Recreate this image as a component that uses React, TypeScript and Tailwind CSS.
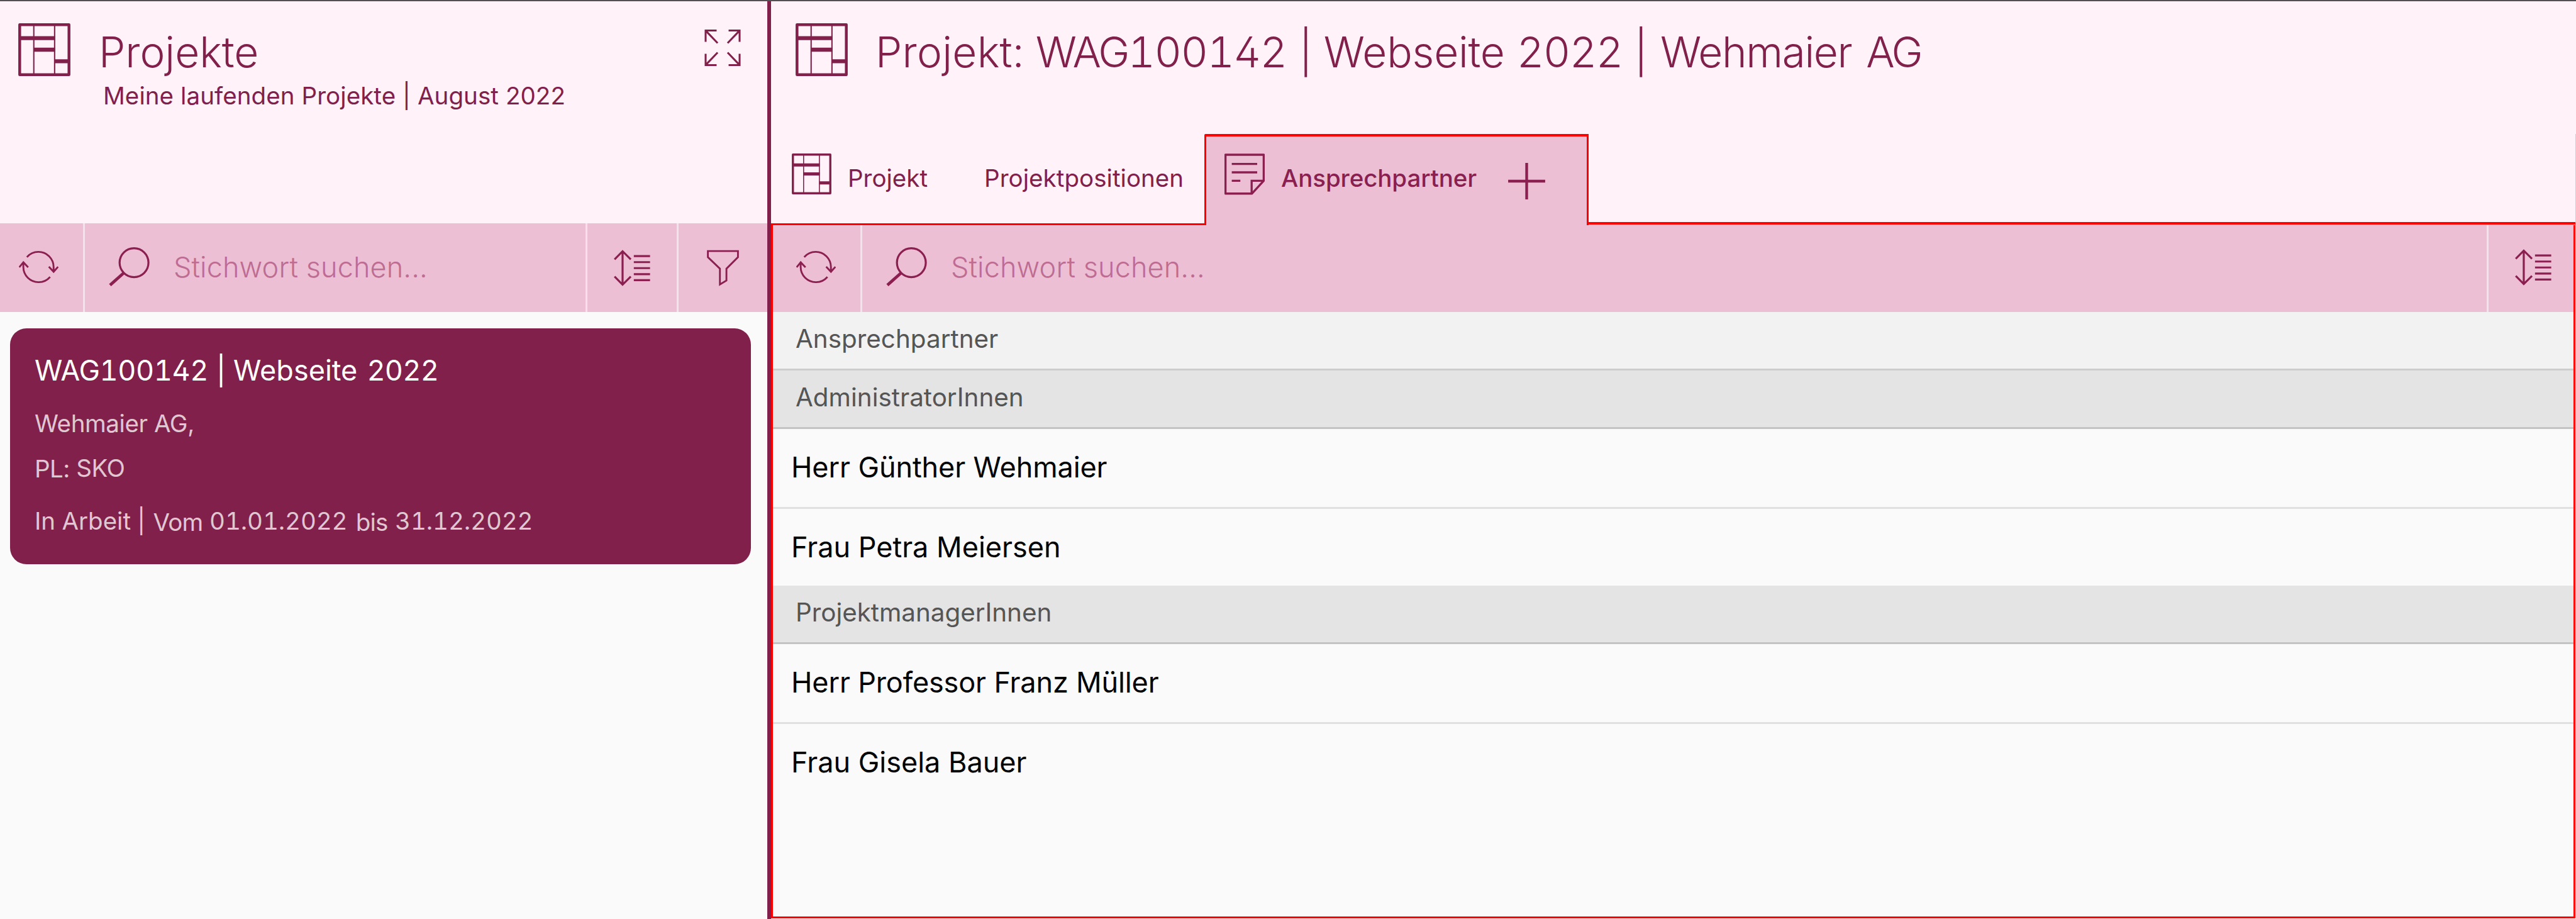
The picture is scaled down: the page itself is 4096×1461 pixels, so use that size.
import type { ReactNode } from 'react';

type IconProps = { className?: string };

function ProjectIcon({ className }: IconProps) {
  return (
    <svg viewBox="0 0 104 105" fill="none" stroke="currentColor" preserveAspectRatio="none" className={className}>
      <rect x="2.9" y="2.9" width="98.2" height="99.2" strokeWidth="5.6" strokeLinejoin="round" />
      <path d="M31 3V102M72.5 3V102" strokeWidth="2.6" />
      <path d="M2 29.5H73.5M31 52.5H73.5M72 75.5H101" strokeWidth="8" />
    </svg>
  );
}

function ExpandIcon({ className }: IconProps) {
  return (
    <svg viewBox="0 0 72 73" fill="none" stroke="currentColor" strokeWidth="3.8" className={className}>
      <path d="M24 2H2V24.5M2 2L26 27" />
      <path d="M48 2H70V24.5M70 2L46 27" />
      <path d="M24 71H2V48.5M2 71L26 46" />
      <path d="M48 71H70V48.5M70 71L46 46" />
    </svg>
  );
}

function RefreshIcon({ className }: IconProps) {
  return (
    <svg viewBox="0 0 79 64" fill="none" stroke="currentColor" strokeWidth="3.6" className={className}>
      <path d="M16 12.3A30.3 30.3 0 0 1 39 1.8A30.3 30.3 0 0 1 69.3 32V41M59.8 31.5L69.3 41.5L78.2 31.5" />
      <path d="M62.3 51.7A30.3 30.3 0 0 1 39 62.2A30.3 30.3 0 0 1 8.9 32V23M0.8 32.5L9 22.5L18.5 32.5" />
    </svg>
  );
}

function SearchIcon({ className }: IconProps) {
  return (
    <svg viewBox="0 0 81 77" fill="none" stroke="currentColor" className={className}>
      <circle cx="50" cy="30.5" r="28.6" strokeWidth="4" />
      <path d="M29.5 51L2.5 75" strokeWidth="6" />
    </svg>
  );
}

function SortIcon({ className }: IconProps) {
  return (
    <svg viewBox="0 0 72 72" fill="none" stroke="currentColor" strokeWidth="4" className={className}>
      <path d="M17.3 3V69M1.5 19L17.3 3L33.5 19M1.5 53L17.3 69L33.5 53" />
      <path d="M39.5 12.5H71.5M39.5 24.5H71.5M39.5 36.3H71.5M39.5 48.2H71.5M39.5 60H71.5" />
    </svg>
  );
}

function FilterIcon({ className }: IconProps) {
  return (
    <svg viewBox="0 0 64 72" fill="none" stroke="currentColor" strokeWidth="3.6" className={className}>
      <path d="M2 2.3H62V14.5L39 37.5V61L26 69V37.5L2 14.5Z" />
    </svg>
  );
}

function NoteIcon({ className }: IconProps) {
  return (
    <svg viewBox="0 0 80 82" fill="none" stroke="currentColor" strokeWidth="4.2" className={className}>
      <path d="M2 2.2H78V54L54.5 79.5H2Z" strokeLinejoin="round" />
      <path d="M78 54H54V79" />
      <path d="M14.5 20.5H65M14.5 37.3H65M14.5 54H31.5" />
    </svg>
  );
}

function PlusIcon({ className }: IconProps) {
  return (
    <svg viewBox="0 0 73 72" fill="none" stroke="currentColor" strokeWidth="5.4" className={className}>
      <path d="M36.5 0V72M0 36H73" />
    </svg>
  );
}

function IconCell({ children, className = '' }: { children: ReactNode; className?: string }) {
  return <div className={`flex h-full shrink-0 items-start border-[#f6e0eb] ${className}`}>{children}</div>;
}

function SearchField({ className = '' }: { className?: string }) {
  return (
    <div className={`flex h-full flex-1 items-start ${className}`}>
      <SearchIcon className="mt-[38px] h-[62px] w-[65px]" />
      <span className="mt-[47px] ml-[38px] text-[45px] leading-none font-light tracking-[0.12px] text-[#be6c92]">Stichwort suchen...</span>
    </div>
  );
}

function GroupRow({ label, className = '', track = '' }: { label: string; className?: string; track?: string }) {
  return (
    <div className={`flex shrink-0 items-start border-b-[3px] pl-[36px] text-[40.4px] leading-none text-[#555] ${className}`}>
      <span className={track}>{label}</span>
    </div>
  );
}

function ContactRow({ name, className = '', track = '' }: { name: string; className?: string; track?: string }) {
  return (
    <div className={`flex shrink-0 items-start border-[#e0e0e0] pl-[29px] text-[45px] leading-none text-black ${className}`}>
      <span className={track}>{name}</span>
    </div>
  );
}

function ProjectCard() {
  return (
    <article className="mt-[26px] ml-[16px] flex h-[375px] w-[1178px] flex-col rounded-[26px] bg-[#80204b] pl-[39px] leading-none text-[#e0c7d2]">
      <h2 className="mt-[44px] text-[45px] leading-none whitespace-pre text-white tabular-nums">
        <span className="tracking-[-0.45px]">WAG100142</span>
        <span className="ml-px"> | </span>
        <span>Webseite </span>
        <span className="ml-[3px] tracking-[-0.7px]">2022</span>
      </h2>
      <p className="mt-[43px] text-[38.5px] leading-none tracking-[-0.4px]">Wehmaier AG,</p>
      <p className="mt-[33px] flex text-[38.5px] leading-none tracking-[-0.5px] whitespace-pre">
        <span>PL:</span>
        <span className="-mt-px"> SKO</span>
      </p>
      <p className="mt-[45px] flex text-[38.5px] leading-none whitespace-pre tabular-nums">
        <span>In Arbeit | </span>
        <span className="mt-[2px] ml-[2px] tracking-[-0.8px]">Vom </span>
        <span className="ml-px tracking-[-0.1px]">01.01.2022 </span>
        <span className="mt-[2px] ml-[3px] tracking-[-0.8px]">bis </span>
        <span className="ml-[2px] tracking-[-0.1px]">31.12.2022</span>
      </p>
    </article>
  );
}

function ProjectsPanel() {
  return (
    <section className="flex w-[1220px] shrink-0 flex-col bg-[#fafafa]">
      <header className="flex h-[353px] shrink-0 items-start bg-[#fff2f8] pl-[29px] text-[#80204b]">
        <ProjectIcon className="mt-[35px] h-[84px] w-[83px]" />
        <div className="ml-[45px] flex flex-1 flex-col">
          <h1 className="mt-[47px] text-[67.4px] leading-none font-light">Projekte</h1>
          <p className="mt-[17px] ml-[7px] text-[38.5px] leading-none tracking-[0.08px] whitespace-pre">Meine laufenden Projekte | August 2022</p>
        </div>
        <ExpandIcon className="mt-[45px] mr-[42px] h-[58px] w-[58px]" />
      </header>
      <div className="flex h-[141px] shrink-0 bg-[#ecbfd4] text-[#8a1f50]">
        <IconCell className="w-[135px] border-r-[3px] pl-[30px]">
          <RefreshIcon className="mt-[44px] h-[51px] w-[63px]" />
        </IconCell>
        <SearchField className="pl-[38px]" />
        <IconCell className="w-[145px] border-l-[3px] pl-[42px]">
          <SortIcon className="mt-[42px] h-[58px] w-[58px]" />
        </IconCell>
        <IconCell className="w-[144px] border-l-[3px] pl-[45px]">
          <FilterIcon className="mt-[42px] h-[58px] w-[51px]" />
        </IconCell>
      </div>
      <ProjectCard />
    </section>
  );
}

function Tabs() {
  return (
    <nav className="flex h-[145px] shrink-0 items-stretch bg-[#ecbfd4] text-[38.5px] leading-none text-[#80204b]">
      <div className="flex w-[689px] shrink-0 items-start border-b-[3px] border-[#ff0000] bg-[#fff2f8] pl-[33px]">
        <ProjectIcon className="mt-[31px] h-[65px] w-[63px]" />
        <span className="mt-[51px] ml-[26px]">Projekt</span>
        <span className="mt-[51px] ml-[90px] tracking-[0.05px]">Projektpositionen</span>
      </div>
      <div className="flex w-[611px] shrink-0 items-start rounded-tl-[3px] border-x-[3px] border-t-4 border-[#ff0000] pl-[29px] text-[#8a1f50]">
        <NoteIcon className="mt-[27px] h-[66px] w-[64px]" />
        <span className="mt-[47px] ml-[26px] font-medium tracking-[-0.1px]">Ansprechpartner</span>
        <PlusIcon className="mt-[42px] ml-[50px] h-[58px] w-[59px]" />
      </div>
      <div className="mr-px mb-px flex-1 border-b-4 border-[#ff0000] bg-[#fff2f8]" />
    </nav>
  );
}

function ProjectDetail() {
  return (
    <section className="flex flex-1 flex-col bg-[#fafafa]">
      <header className="flex h-[211px] shrink-0 items-start bg-[#fff2f8] pl-[39px] text-[#80204b]">
        <ProjectIcon className="mt-[35px] h-[84px] w-[83px]" />
        <h1 className="mt-[47px] ml-[44px] text-[67.4px] leading-none font-light whitespace-pre tabular-nums">
          <span className="tracking-[0.3px]">Projekt: </span>
          <span className="tracking-[-2.7px]">WAG</span>
          <span className="tracking-[-1.6px]">100142</span>
          <span className="ml-[2px]"> | </span>
          <span className="tracking-[-0.2px]">Webseite </span>
          <span className="ml-px tracking-[-1.6px]">2022</span>
          <span className="ml-px"> | </span>
          <span className="ml-[2px] tracking-[-1.35px]">Wehmaier </span>
          <span className="ml-[6px] tracking-[-3px]">AG</span>
        </h1>
      </header>
      <Tabs />
      <div className="mr-px mb-px flex flex-1 flex-col border-x-[3px] border-b-[3px] border-[#ff0000]">
        <div className="flex h-[138px] shrink-0 bg-[#ecbfd4] text-[#8a1f50]">
          <IconCell className="w-[142px] border-r-[3px] pl-[37px]">
            <RefreshIcon className="mt-[41px] h-[51px] w-[63px]" />
          </IconCell>
          <SearchField className="-mt-[3px] pl-[38px]" />
          <IconCell className="w-[138px] border-l-[3px] pl-[42px]">
            <SortIcon className="mt-[38px] h-[58px] w-[58px]" />
          </IconCell>
        </div>
        <GroupRow label="Ansprechpartner" className="h-[93px] border-[#cdcdcd] bg-[#f2f2f2] pt-[23px]" />
        <GroupRow label="AdministratorInnen" className="h-[93px] border-[#c3c3c3] bg-[#e4e4e4] pt-[23px]" />
        <ContactRow name="Herr Günther Wehmaier" className="h-[127px] border-b-[3px] pt-[38px]" track="tracking-[-0.1px]" />
        <ContactRow name="Frau Petra Meiersen" className="h-[122px] pt-[38px]" />
        <GroupRow label="ProjektmanagerInnen" className="h-[93px] border-[#c3c3c3] bg-[#e4e4e4] pt-[23px]" track="tracking-[-0.04px]" />
        <ContactRow name="Herr Professor Franz Müller" className="h-[127px] border-b-[3px] pt-[38px]" track="tracking-[-0.14px]" />
        <ContactRow name="Frau Gisela Bauer" className="h-[122px] pt-[38px]" />
      </div>
    </section>
  );
}

export default function App() {
  return (
    <div className="flex h-[1461px] w-[4096px] flex-col overflow-hidden bg-[#fafafa] font-['Inter',sans-serif] [font-feature-settings:'cv02']">
      <div className="h-[2px] shrink-0 bg-[#535053]" />
      <main className="flex min-h-0 flex-1">
        <ProjectsPanel />
        <div className="w-[6px] shrink-0 bg-[#80204b]" />
        <ProjectDetail />
      </main>
    </div>
  );
}
